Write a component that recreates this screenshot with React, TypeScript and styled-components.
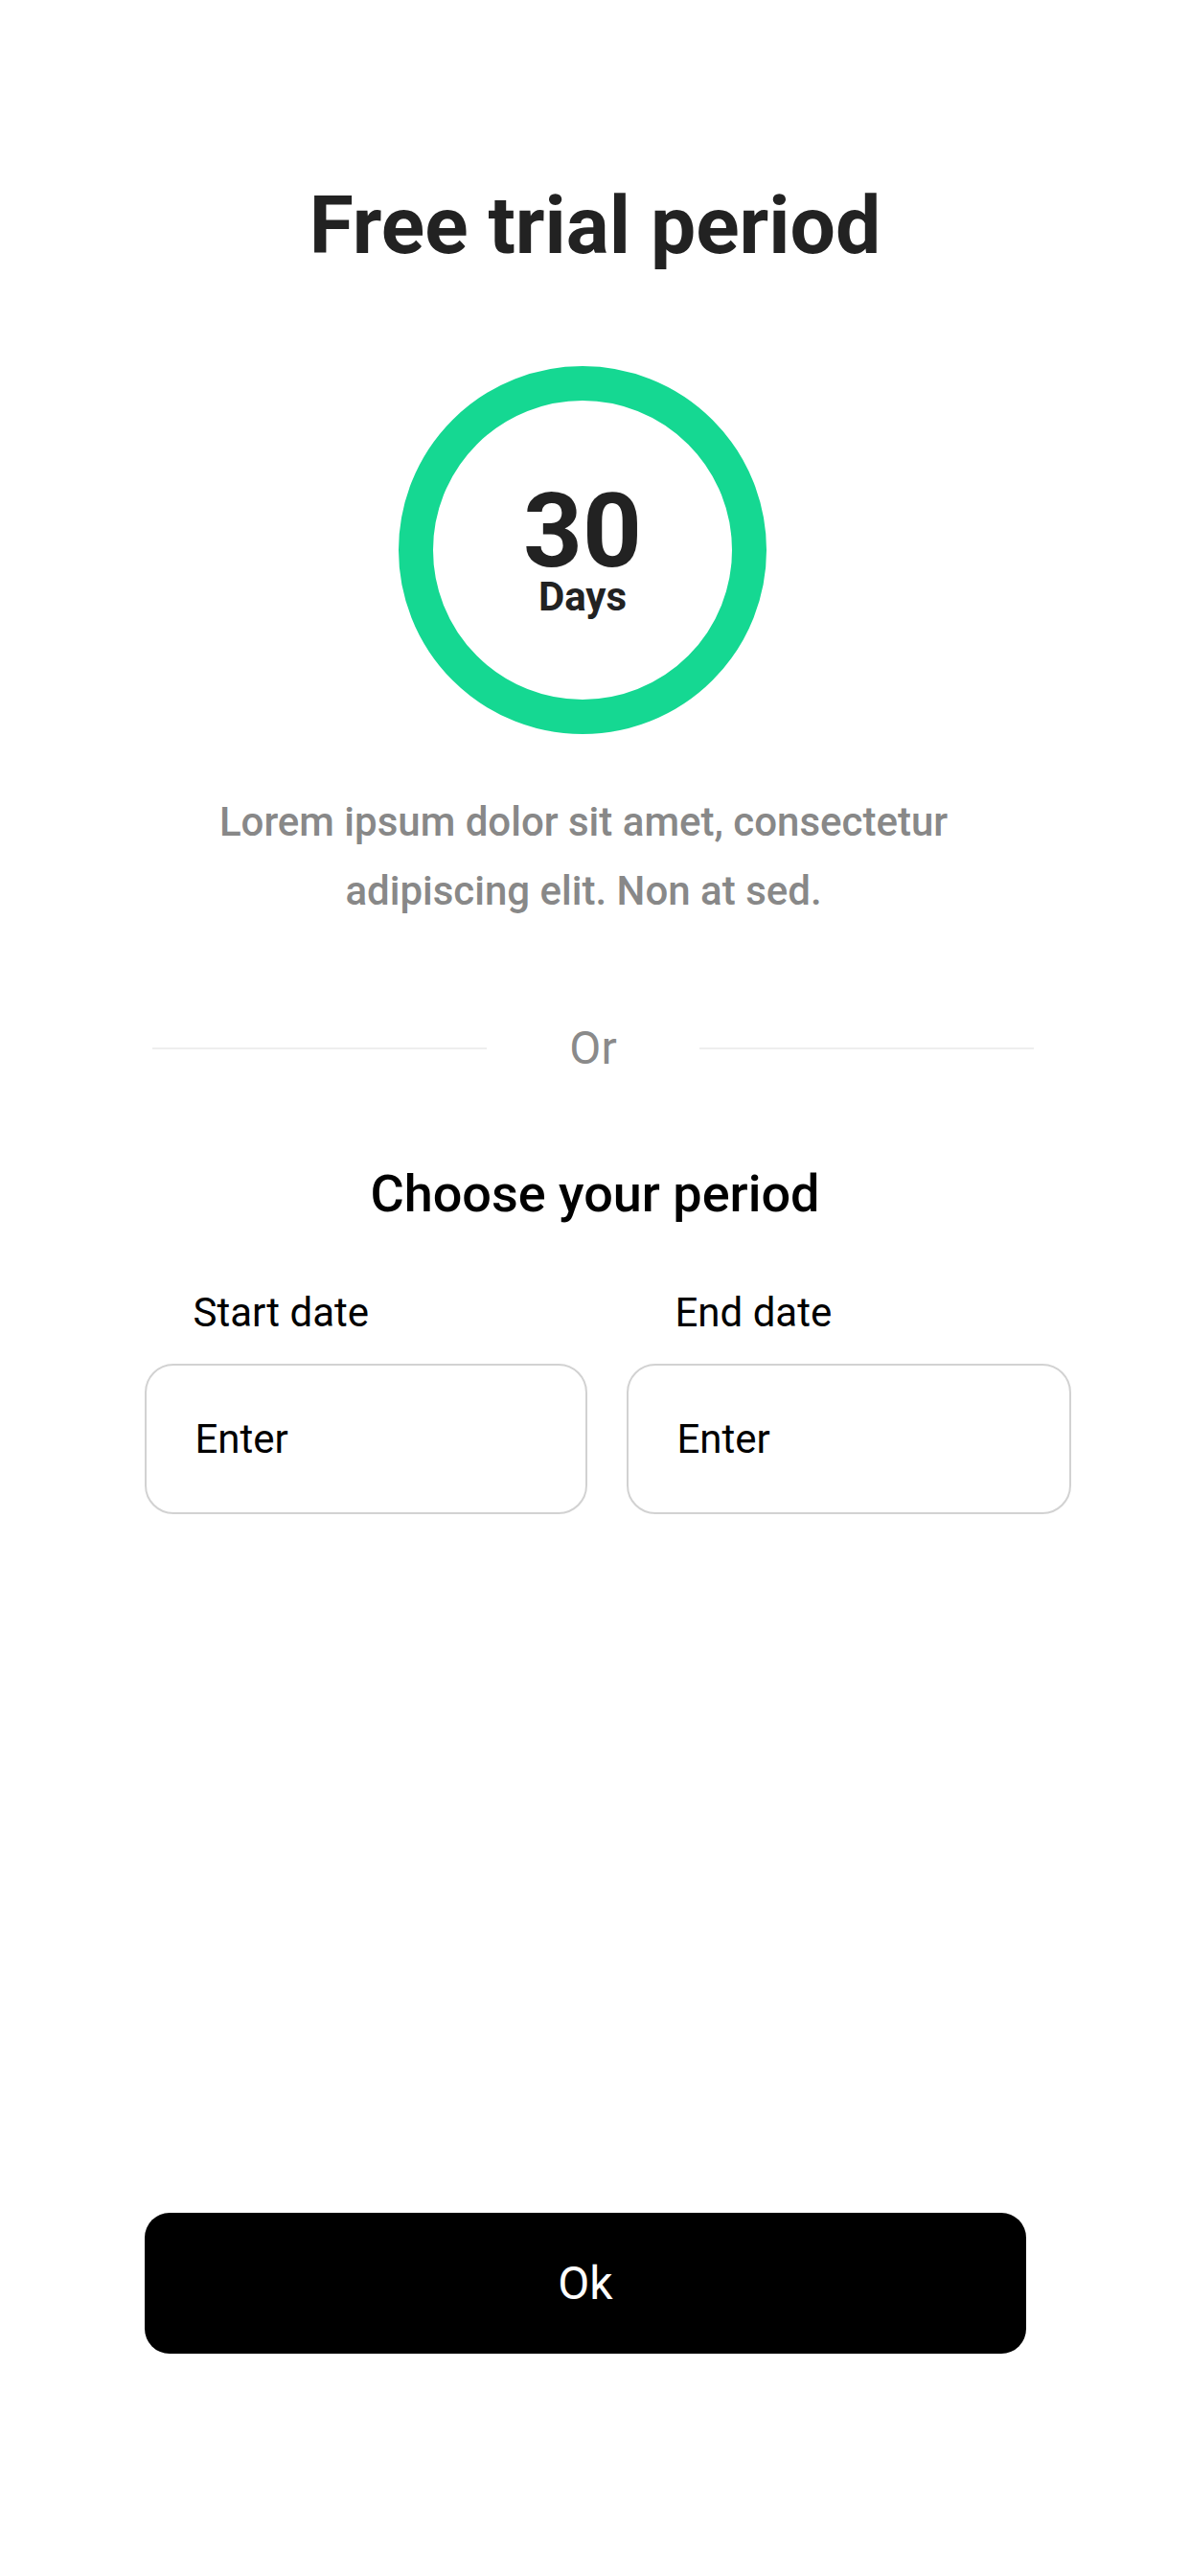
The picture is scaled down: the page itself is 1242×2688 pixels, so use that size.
import React from 'react';
import styled, { createGlobalStyle } from 'styled-components';

const GlobalStyle = createGlobalStyle`
  * {
    box-sizing: border-box;
  }
  body {
    margin: 0;
    background: #ffffff;
    font-family: Roboto, "Liberation Sans", Arial, sans-serif;
  }
`;

const Page = styled.div`
  width: 1242px;
  min-height: 2688px;
  padding: 186px 0 232px;
  display: flex;
  flex-direction: column;
  align-items: center;
  background: #ffffff;
`;

const Title = styled.h1`
  margin: 0;
  font-size: 84px;
  line-height: 100px;
  font-weight: 700;
  color: #222222;
`;

const Ring = styled.div`
  width: 384px;
  height: 384px;
  margin: 96px 26px 0 0;
  border: 36px solid #15d892;
  border-radius: 50%;
  display: flex;
  flex-direction: column;
  align-items: center;
  justify-content: center;
`;

const Count = styled.div`
  font-size: 108px;
  line-height: 100px;
  font-weight: 700;
  color: #222222;
`;

const Unit = styled.div`
  margin-top: -2px;
  font-size: 42px;
  line-height: 42px;
  font-weight: 700;
  color: #222222;
`;

const Description = styled.p`
  margin: 56px 24px 0 0;
  max-width: 820px;
  font-size: 42px;
  line-height: 72px;
  font-weight: 500;
  color: #888888;
  text-align: center;
`;

const Divider = styled.div`
  width: 920px;
  margin: 104px 0 0 -4px;
  display: flex;
  align-items: center;
  gap: 86px;
`;

const Rule = styled.span`
  flex: 1;
  height: 2px;
  background: #eeeeee;
`;

const DividerText = styled.span`
  font-size: 48px;
  line-height: 48px;
  color: #8a8a8a;
`;

const Subtitle = styled.h2`
  margin: 101px 0 0;
  font-size: 54px;
  line-height: 54px;
  font-weight: 500;
  color: #000000;
`;

const Fields = styled.div`
  width: 967px;
  margin: 76px 0 0 26px;
  display: grid;
  grid-template-columns: 462px 464px;
  column-gap: 41px;
`;

const Field = styled.label`
  display: flex;
  flex-direction: column;
  gap: 32px;
`;

const FieldLabel = styled.span`
  padding-left: 51px;
  font-size: 42px;
  line-height: 42px;
  color: #000000;
`;

const FieldBox = styled.div`
  height: 157px;
  padding-left: 51px;
  display: flex;
  align-items: center;
  border: 2px solid #d2d2d2;
  border-radius: 30px;
  font-size: 42px;
  line-height: 42px;
  color: #000000;
`;

const OkButton = styled.button`
  width: 920px;
  height: 147px;
  margin: auto 20px 0 0;
  border: none;
  border-radius: 26px;
  background: #000000;
  color: #ffffff;
  font-family: inherit;
  font-size: 48px;
  font-weight: 400;
  cursor: pointer;
`;

const App: React.FC = () => {
  const fields = [
    { label: 'Start date', placeholder: 'Enter' },
    { label: 'End date', placeholder: 'Enter' },
  ];

  return (
    <>
      <GlobalStyle />
      <Page>
        <Title>Free trial period</Title>
        <Ring>
          <Count>30</Count>
          <Unit>Days</Unit>
        </Ring>
        <Description>
          Lorem ipsum dolor sit amet, consectetur adipiscing elit. Non at sed.
        </Description>
        <Divider>
          <Rule />
          <DividerText>Or</DividerText>
          <Rule />
        </Divider>
        <Subtitle>Choose your period</Subtitle>
        <Fields>
          {fields.map((f) => (
            <Field key={f.label}>
              <FieldLabel>{f.label}</FieldLabel>
              <FieldBox>{f.placeholder}</FieldBox>
            </Field>
          ))}
        </Fields>
        <OkButton>Ok</OkButton>
      </Page>
    </>
  );
};

export default App;
